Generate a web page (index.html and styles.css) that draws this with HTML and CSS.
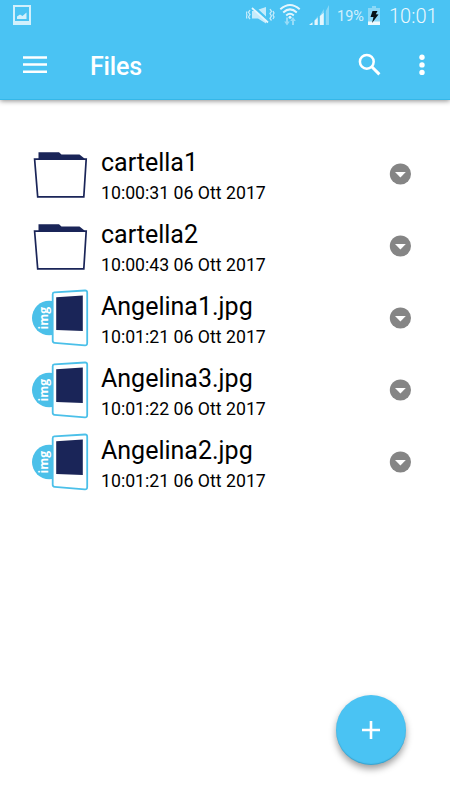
FILE: index.html
```
<!DOCTYPE html>
<html lang="it">
<head>
<meta charset="utf-8">
<title>Files</title>
<link rel="stylesheet" href="styles.css">
</head>
<body>
<svg class="defs" aria-hidden="true">
  <symbol id="folder" viewBox="0 0 60 60">
    <path d="M8.5 15V8.2H29L31.5 10.6H49.5L54.5 14.5V15Z" fill="#1a2558"/>
    <path d="M4.6 15.1H56.2L53.8 52.8H7.7Z" fill="#fff" stroke="#1a2558" stroke-width="1.7"/>
  </symbol>
  <symbol id="more" viewBox="0 0 22 22">
    <circle cx="11.4" cy="11" r="10.6" fill="#858585"/>
    <path d="M6 9H16.8L11.4 14.4Z" fill="#fff"/>
  </symbol>
</svg>

<header class="top">
  <div class="status">
    <svg class="shot" width="18" height="20" viewBox="0 0 18 20">
      <path fill="#fff" fill-rule="evenodd" d="M0 0H18V20H0ZM2 2V16H16V2Z"/>
      <path fill="#fff" d="M4 14V11.5L7 9.5L9.5 11L13.5 7.5V14Z"/>
    </svg>
    <svg class="signals" width="86" height="32" viewBox="0 0 86 32">
      <g fill="none" stroke="#fff" stroke-width="1.3" opacity=".8">
        <path d="M4 10L2.5 12.3L4 14.6L2.5 16.9L4 19.2M1 11.5L.3 13.3L1 15L.3 17L1 18.5M24 9L25.5 11.3L24 13.6L25.5 15.9L24 18.5L25.5 20.5M27 11L28 13L27 15L28 17L27 19"/>
      </g>
      <path d="M6 11H10L20 20V23.5L12 18.5H6ZM12.5 9.5L20 7V16.5Z" fill="#fff" opacity=".8"/>
      <path d="M6 8L22 22.5" stroke="#fff" stroke-width="1.8"/>
      <g fill="none" stroke="#fff" stroke-width="2">
        <path d="M34.3 9.3Q44 .8 53.7 9.3M37.2 12.4Q44 6.4 50.8 12.4M40.2 15.4Q44 12.1 47.8 15.4"/>
      </g>
      <circle cx="44" cy="17.3" r="1.5" fill="#fff"/>
      <path d="M38.2 21.5L41 25.5L43.8 21.5H42V17.5H40V21.5ZM44.2 21L47 17L49.8 21H48V25H46V21Z" fill="#fff" opacity=".5"/>
      <path d="M63 25L66.5 22.3V25ZM68.5 25V20.5L71.8 17.8V25ZM73.8 25V16L77.8 12.7V25Z" fill="#fff"/>
      <path d="M79.8 11L83 5V25H79.8ZM68.5 20.5L71.8 16V18ZM73.8 16L77.8 9V13Z" fill="#fff" opacity=".4"/>
    </svg>
    <span class="percent">19%</span>
    <svg class="battery" width="12" height="19" viewBox="0 0 12 19">
      <path d="M0 2H4V0H8V2H12V19H0Z" fill="#fff" opacity=".4"/>
      <path d="M0 15.5H12V19H0Z" fill="#fff"/>
      <path d="M4.5 5H9.5L7.8 8.3L10.5 8.5L4 17L5.5 11H2.5Z" fill="#000"/>
    </svg>
    <span class="clock">10:01</span>
  </div>
  <div class="bar">
    <svg class="menu" width="24" height="18" viewBox="0 0 24 18"><path d="M0 1.5H24M0 8.5H24M0 15.8H24" stroke="#fff" stroke-width="2.5"/></svg>
    <h1 class="title">Files</h1>
    <svg class="search" width="24" height="24" viewBox="0 0 24 24" fill="none" stroke="#fff"><circle cx="8.8" cy="8.8" r="6.9" stroke-width="2.5"/><path d="M13.8 13.8L21.4 21.4" stroke-width="3"/></svg>
    <svg class="dots" width="6" height="22" viewBox="0 0 6 22" fill="#fff"><circle cx="3" cy="3.3" r="2.7"/><circle cx="3" cy="10.9" r="2.7"/><circle cx="3" cy="18.4" r="2.7"/></svg>
  </div>
</header>

<ul class="list">
  <li class="row"><svg class="icon"><use href="#folder"/></svg><div class="info"><div class="name">cartella1</div><div class="date">10:00:31 06 Ott 2017</div></div><svg class="more"><use href="#more"/></svg></li>
  <li class="row"><svg class="icon"><use href="#folder"/></svg><div class="info"><div class="name">cartella2</div><div class="date">10:00:43 06 Ott 2017</div></div><svg class="more"><use href="#more"/></svg></li>
  <li class="row">
    <svg class="icon" viewBox="0 0 60 60">
      <g id="image">
        <circle cx="19.2" cy="30" r="17.2" fill="#4bc0e9"/>
        <path d="M24.2 4.4L55 2.5Q57.2 2.4 57.2 4.7V55Q57.2 57.6 54.8 57.4L24.6 54.8Q22.7 54.7 22.7 52.8V6.2Q22.7 4.5 24.2 4.4Z" fill="#fff" stroke="#4bc0e9" stroke-width="1.8"/>
        <path d="M26.2 9.2L52.8 7.6V43L26.2 42Z" fill="#1a2558"/>
        <text class="tag" transform="translate(17.6 41.4) rotate(-90)" textLength="22.5" lengthAdjust="spacingAndGlyphs">img</text>
      </g>
    </svg>
    <div class="info"><div class="name">Angelina1.jpg</div><div class="date">10:01:21 06 Ott 2017</div></div><svg class="more"><use href="#more"/></svg></li>
  <li class="row"><svg class="icon" viewBox="0 0 60 60"><use href="#image"/></svg><div class="info"><div class="name">Angelina3.jpg</div><div class="date">10:01:22 06 Ott 2017</div></div><svg class="more"><use href="#more"/></svg></li>
  <li class="row"><svg class="icon" viewBox="0 0 60 60"><use href="#image"/></svg><div class="info"><div class="name">Angelina2.jpg</div><div class="date">10:01:21 06 Ott 2017</div></div><svg class="more"><use href="#more"/></svg></li>
</ul>

<button class="fab" aria-label="Aggiungi">
  <svg width="18" height="18" viewBox="0 0 18 18"><path d="M9 0V18M0 9H18" stroke="#fff" stroke-width="2.6"/></svg>
</button>
</body>
</html>
```
FILE: styles.css
```
* { box-sizing: border-box; }
body {
  margin: 0;
  height: 800px;
  overflow: hidden;
  background: #fff;
  color: #000;
  font-family: Roboto, "Liberation Sans", sans-serif;
}
svg { display: block; flex: none; }
.defs { position: absolute; width: 0; height: 0; }
.top {
  height: 100px;
  background: #4ac3f3;
  border-bottom: 1px solid #35b7e8;
  box-shadow: 0 1px 5px rgba(0, 0, 0, .45);
  color: #fff;
}
.status {
  height: 32px;
  display: flex;
  align-items: center;
  padding: 0 12px 0 13px;
}
.shot { margin-top: -2px; opacity: .75; }
.signals { margin-left: auto; margin-right: 1px; opacity: .85; }
.percent { margin-left: 4px; width: 27px; font-size: 14.5px; opacity: .75; white-space: nowrap; }
.battery { margin: -2px 9px 0 4px; opacity: .9; }
.clock { width: 49px; font-size: 20px; font-weight: 300; opacity: .9; white-space: nowrap; }
.bar {
  height: 67px;
  display: flex;
  align-items: center;
  padding: 0 25px 0 23px;
}
.menu { margin-top: -2px; }
.title { margin: 2px 0 0 43px; font-size: 25px; line-height: 30px; font-weight: 500; letter-spacing: -.15px; }
.search { margin: -2px 37px 0 auto; }
.dots { margin-top: -1px; }
.list { list-style: none; margin: 0; padding: 38px 39px 0 30px; }
.row { height: 72px; display: flex; align-items: center; }
.icon { width: 60px; height: 60px; }
.tag { font: 700 13px "Open Sans", sans-serif; fill: #fff; }
.info { flex: 1; margin: 3px 0 0 11px; white-space: nowrap; }
.name { font-size: 25px; line-height: 32px; }
.date { font-size: 17.7px; line-height: 24px; margin-top: 2px; }
.more { width: 22px; height: 22px; }
.fab {
  position: absolute;
  left: 336px;
  top: 695px;
  width: 70px;
  height: 70px;
  display: flex;
  align-items: center;
  justify-content: center;
  padding: 0;
  border: 0;
  border-radius: 50%;
  background: #4ac3f3;
  box-shadow: 0 4px 7px rgba(0, 0, 0, .38), inset 0 -1px 1px rgba(0, 90, 130, .3);
}
```
